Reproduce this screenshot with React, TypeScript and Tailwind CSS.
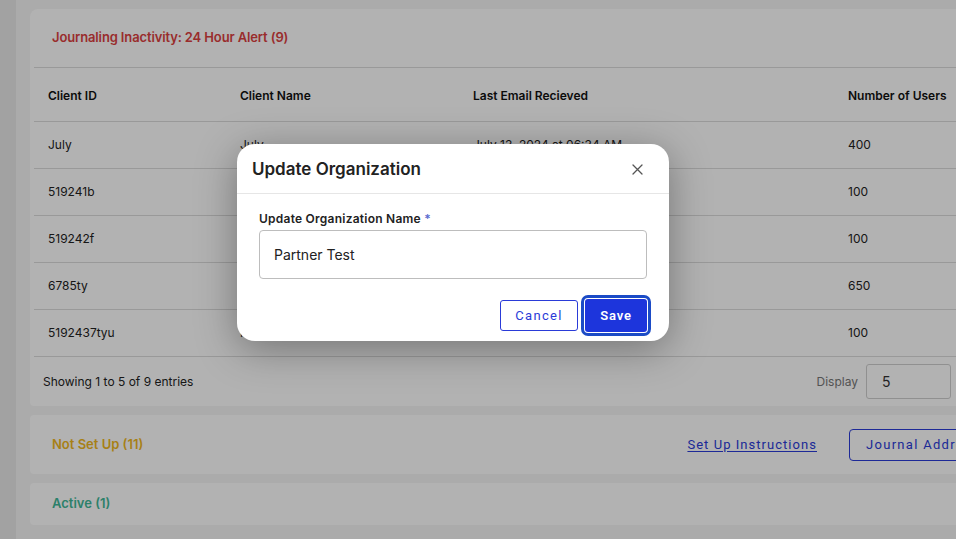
import React from "react";

const rows = [
  { id: "July", name: "July", email: "July 13, 2024 at 06:34 AM", users: "400" },
  { id: "519241b", name: "Partner Test", email: "July 12, 2024 at 11:20 AM", users: "100" },
  { id: "519242f", name: "Partner Test 2", email: "July 12, 2024 at 11:21 AM", users: "100" },
  { id: "6785ty", name: "Test Org", email: "July 10, 2024 at 09:02 AM", users: "650" },
  { id: "5192437tyu", name: "Partner", email: "July 09, 2024 at 04:15 PM", users: "100" },
];

const grid = "grid grid-cols-[192px_233px_375px_1fr]";

export default function App() {
  return (
    <div
      className="relative h-[539px] w-[956px] overflow-hidden bg-[#f5f5f5] text-[#222]"
      style={{ fontFamily: "Inter, 'Noto Sans', sans-serif" }}
    >
      <div className="flex h-full">
        <div className="w-[16px] shrink-0 bg-[#e9e9e9]" />
        <div className="flex w-[1000px] shrink-0 flex-col gap-[9px] pl-[14px] pt-[9px]">
          {/* Card 1 */}
          <div className="rounded-tl-[8px] rounded-bl-[4px] bg-white">
            <div className="flex h-[58px] items-center pl-[22px] text-[13px] font-semibold tracking-[-0.01em] text-[#dc3f3f]">
              Journaling Inactivity: 24 Hour Alert (9)
            </div>
            <div className="ml-[4px] border-t border-[#dcdcdc]">
              <div className={`${grid} h-[54px] items-center border-b border-[#dcdcdc] pt-[2px] text-[12px] font-semibold text-[#111]`}>
                <div className="pl-[14px]">Client ID</div>
                <div className="pl-[14px]">Client Name</div>
                <div className="pl-[14px]">Last Email Recieved</div>
                <div className="pl-[14px]">Number of Users</div>
              </div>
              {rows.map((r) => (
                <div
                  key={r.id}
                  className={`${grid} h-[47px] items-center border-b border-[#dcdcdc] text-[12px] text-[#222]`}
                >
                  <div className="pl-[14px]">{r.id}</div>
                  <div className="pl-[14px]">{r.name}</div>
                  <div className="pl-[14px]">{r.email}</div>
                  <div className="pl-[14px]">{r.users}</div>
                </div>
              ))}
              <div className="flex h-[49px] items-center justify-between pl-[9px] pr-[65px] text-[12px]">
                <span className="text-[#222]">Showing 1 to 5 of 9 entries</span>
                <div className="flex items-center gap-[8px]">
                  <span className="text-[#777]">Display</span>
                  <div className="flex h-[35px] w-[85px] items-center rounded-[3px] border border-[#cfcfcf] pl-[15px] text-[14px] text-[#333]">
                    5
                  </div>
                </div>
              </div>
            </div>
          </div>

          {/* Card 2 */}
          <div className="flex h-[59px] items-center justify-between rounded-l-[4px] bg-white pl-[22px] pr-[15px]">
            <span className="text-[13px] font-semibold text-[#f0b81f]">Not Set Up (11)</span>
            <div className="flex items-center gap-[32px]">
              <a
                className="text-[13px] tracking-[0.08em] text-[#2a3bd8] underline underline-offset-2"
                style={{ fontFamily: "Roboto, 'Liberation Sans', sans-serif" }}
              >
                Set Up Instructions
              </a>
              <button
                className="h-[32px] w-[152px] rounded-[4px] border border-[#2a3bd8] pl-[16px] text-left text-[13px] tracking-[0.1em] text-[#2a3bd8]"
                style={{ fontFamily: "Roboto, 'Liberation Sans', sans-serif" }}
              >
                Journal Address
              </button>
            </div>
          </div>

          {/* Card 3 */}
          <div className="flex h-[42px] items-center rounded-l-[4px] bg-white pl-[22px]">
            <span className="text-[13px] font-semibold text-[#3fb898]">Active (1)</span>
          </div>
        </div>
      </div>

      {/* Overlay */}
      <div className="absolute inset-0 bg-black/30" />

      {/* Modal */}
      <div className="absolute left-[237px] top-[144px] w-[432px] rounded-[18px] bg-white shadow-[0_8px_40px_rgba(0,0,0,0.35)]">
        <div className="flex h-[50px] items-center justify-between border-b border-[#e6e6e6] pl-[15px] pr-[26px] pt-[2px]">
          <span className="text-[17px] font-semibold text-[#222]">Update Organization</span>
          <svg width="11" height="11" viewBox="0 0 11 11" className="text-[#555]">
            <path d="M1 1L10 10M10 1L1 10" stroke="currentColor" strokeWidth="1.3" strokeLinecap="round" />
          </svg>
        </div>
        <div className="px-[22px] pb-[9px] pt-[16px]">
          <div className="text-[12px] font-semibold tracking-[0.02em] text-[#222]">
            Update Organization Name <span className="text-[#5a6bd0]">*</span>
          </div>
          <div className="mt-[2px] flex h-[49px] items-center rounded-[4px] border border-[#bdbdbd] pl-[14px] text-[14px] text-[#222]">
            Partner Test
          </div>
          <div className="mt-[20px] flex items-center justify-end gap-[7px] pr-[0px]">
            <button
              className="h-[31px] w-[78px] rounded-[3px] border border-[#2a3bd8] text-[13px] tracking-[0.1em] text-[#2a3bd8]"
              style={{ fontFamily: "Roboto, 'Liberation Sans', sans-serif" }}
            >
              Cancel
            </button>
            <button
              className="h-[33px] w-[62px] rounded-[3px] bg-[#1d35dc] text-[13px] font-semibold tracking-[0.06em] text-white outline outline-[3px] outline-offset-[1px] outline-[#1b4bc6]"
              style={{ fontFamily: "Roboto, 'Liberation Sans', sans-serif" }}
            >
              Save
            </button>
          </div>
        </div>
      </div>
    </div>
  );
}
